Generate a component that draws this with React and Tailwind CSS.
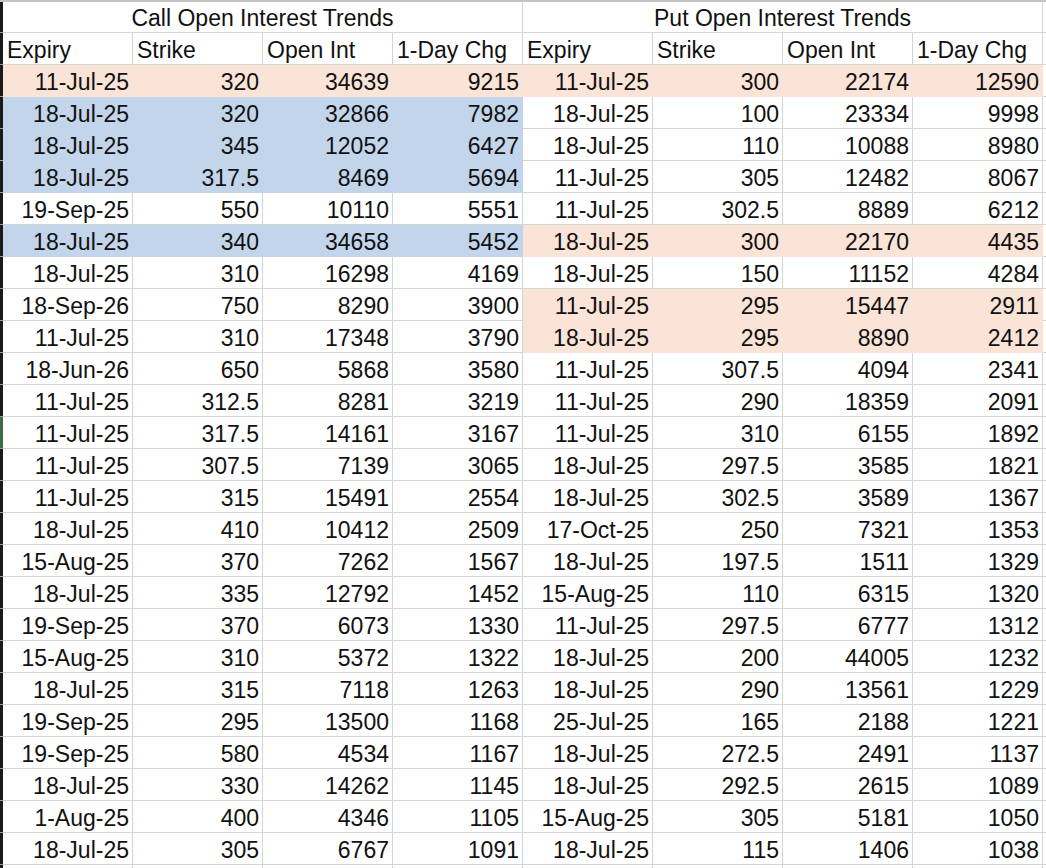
const calls = [
  "11-Jul-25|320|34639|9215|o",
  "18-Jul-25|320|32866|7982|b",
  "18-Jul-25|345|12052|6427|b",
  "18-Jul-25|317.5|8469|5694|b",
  "19-Sep-25|550|10110|5551|",
  "18-Jul-25|340|34658|5452|b",
  "18-Jul-25|310|16298|4169|",
  "18-Sep-26|750|8290|3900|",
  "11-Jul-25|310|17348|3790|",
  "18-Jun-26|650|5868|3580|",
  "11-Jul-25|312.5|8281|3219|",
  "11-Jul-25|317.5|14161|3167|",
  "11-Jul-25|307.5|7139|3065|",
  "11-Jul-25|315|15491|2554|",
  "18-Jul-25|410|10412|2509|",
  "15-Aug-25|370|7262|1567|",
  "18-Jul-25|335|12792|1452|",
  "19-Sep-25|370|6073|1330|",
  "15-Aug-25|310|5372|1322|",
  "18-Jul-25|315|7118|1263|",
  "19-Sep-25|295|13500|1168|",
  "19-Sep-25|580|4534|1167|",
  "18-Jul-25|330|14262|1145|",
  "1-Aug-25|400|4346|1105|",
  "18-Jul-25|305|6767|1091|",
];

const puts = [
  "11-Jul-25|300|22174|12590|o",
  "18-Jul-25|100|23334|9998|",
  "18-Jul-25|110|10088|8980|",
  "11-Jul-25|305|12482|8067|",
  "11-Jul-25|302.5|8889|6212|",
  "18-Jul-25|300|22170|4435|o",
  "18-Jul-25|150|11152|4284|",
  "11-Jul-25|295|15447|2911|o",
  "18-Jul-25|295|8890|2412|o",
  "11-Jul-25|307.5|4094|2341|",
  "11-Jul-25|290|18359|2091|",
  "11-Jul-25|310|6155|1892|",
  "18-Jul-25|297.5|3585|1821|",
  "18-Jul-25|302.5|3589|1367|",
  "17-Oct-25|250|7321|1353|",
  "18-Jul-25|197.5|1511|1329|",
  "15-Aug-25|110|6315|1320|",
  "11-Jul-25|297.5|6777|1312|",
  "18-Jul-25|200|44005|1232|",
  "18-Jul-25|290|13561|1229|",
  "25-Jul-25|165|2188|1221|",
  "18-Jul-25|272.5|2491|1137|",
  "18-Jul-25|292.5|2615|1089|",
  "15-Aug-25|305|5181|1050|",
  "18-Jul-25|115|1406|1038|",
];

const headers = ["Expiry", "Strike", "Open Int", "1-Day Chg"];

const fillClass = (f) =>
  f === "o"
    ? "bg-[#fae3d7] border-[#fae3d7]"
    : f === "b"
    ? "bg-[#c2d5eb] border-[#c2d5eb]"
    : "bg-white border-[#d4d4d4]";

const RowHead = ({ selected }) => (
  <div
    className={`w-[3px] shrink-0 border-b border-[#9a9a9a] ${
      selected ? "bg-[#3b6e48]" : "bg-[#1a1a1a]"
    }`}
  />
);

const Cell = ({ children, fill, left }) => (
  <div
    className={`w-[130px] h-[32px] shrink-0 border-r border-b flex items-center pt-[4px] ${
      left ? "justify-start pl-[4px]" : "justify-end pr-[3px]"
    } ${fillClass(fill)}`}
  >
    {children}
  </div>
);

export default function App() {
  return (
    <div
      className="w-[1046px] h-[868px] overflow-hidden bg-white border-t-2 border-[#c4c4c4] text-[23px] text-[#111] leading-none"
      style={{ fontFamily: '"Liberation Sans", Arial, sans-serif' }}
    >
      {/* title row */}
      <div className="flex h-[31px]">
        <RowHead />
        <div className="w-[520px] shrink-0 border-r border-b border-[#d4d4d4] flex items-center justify-center pt-[2px]">
          Call Open Interest Trends
        </div>
        <div className="w-[520px] shrink-0 border-r border-b border-[#d4d4d4] flex items-center justify-center pt-[2px]">
          Put Open Interest Trends
        </div>
        <div className="flex-1 border-b border-[#d4d4d4]" />
      </div>

      {/* header row */}
      <div className="flex">
        <RowHead />
        {[...headers, ...headers].map((h, i) => (
          <Cell key={i} left>
            {h}
          </Cell>
        ))}
        <div className="flex-1 border-b border-[#d4d4d4]" />
      </div>

      {calls.map((c, i) => {
        const a = c.split("|");
        const b = puts[i].split("|");
        return (
          <div key={i} className="flex">
            <RowHead selected={i === 11} />
            {a.slice(0, 4).map((v, j) => (
              <Cell key={"c" + j} fill={a[4]}>
                {v}
              </Cell>
            ))}
            {b.slice(0, 4).map((v, j) => (
              <Cell key={"p" + j} fill={b[4]}>
                {v}
              </Cell>
            ))}
            <div className="flex-1 h-[32px] border-b border-[#d4d4d4]" />
          </div>
        );
      })}

      <div className="flex h-[32px]">
        <RowHead />
        {headers.concat(headers).map((_, i) => (
          <Cell key={i} />
        ))}
      </div>
    </div>
  );
}
